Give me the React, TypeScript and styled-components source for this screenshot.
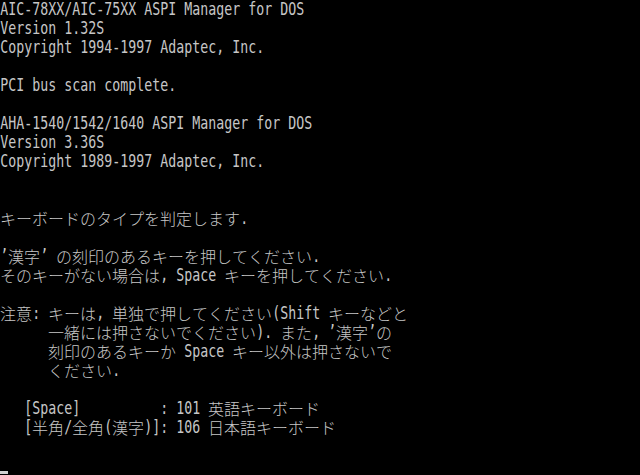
import React from 'react';
import styled, { createGlobalStyle } from 'styled-components';

// DOS/V text screen: 80 columns x 25 rows, 8x19 cells
const LINES = [
    'AIC-78XX/AIC-75XX ASPI Manager for DOS',
    'Version 1.32S',
    'Copyright 1994-1997 Adaptec, Inc.',
    '',
    'PCI bus scan complete.',
    '',
    'AHA-1540/1542/1640 ASPI Manager for DOS',
    'Version 3.36S',
    'Copyright 1989-1997 Adaptec, Inc.',
    '',
    '',
    'キーボードのタイプを判定します.',
    '',
    '’漢字’ の刻印のあるキーを押してください.',
    'そのキーがない場合は, Space キーを押してください.',
    '',
    '注意: キーは, 単独で押してください(Shift キーなどと',
    '      一緒には押さないでください). また, ’漢字’の',
    '      刻印のあるキーか Space キー以外は押さないで',
    '      ください.',
    '',
    '   [Space]          : 101 英語キーボード',
    '   [半角/全角(漢字)]: 106 日本語キーボード',
    '',
];

const isWide = (ch: string) => {
    const c = ch.codePointAt(0) || 0;
    return (
        (c >= 0x2e80 && c <= 0xa4cf) ||
        (c >= 0xf900 && c <= 0xfaff) ||
        (c >= 0xfe30 && c <= 0xfe4f) ||
        (c >= 0xff00 && c <= 0xff60) ||
        (c >= 0xffe0 && c <= 0xffe6)
    );
};

const App = () => {
    return (
        <>
            <GlobalStyle />
            <Screen>
                {LINES.map((text, i) => (
                    <Line key={i}>
                        {Array.from(text).map((ch, j) =>
                            isWide(ch) ? (
                                <Cell key={j} $wide>
                                    <WideGlyph>{ch}</WideGlyph>
                                </Cell>
                            ) : (
                                <Cell key={j}>
                                    <Glyph>{ch === ' ' ? '\u00a0' : ch}</Glyph>
                                </Cell>
                            )
                        )}
                    </Line>
                ))}
                <Line>
                    <Cursor />
                </Line>
            </Screen>
        </>
    );
};

export default App;

const GlobalStyle = createGlobalStyle`
    html, body {
        margin: 0;
        padding: 0;
        background: #000;
    }
`;

const Screen = styled.div`
    width: 640px;
    height: 475px;
    background: #000;
    color: #c6c6c6;
    overflow: hidden;
    display: flex;
    flex-direction: column;
`;

const Line = styled.div`
    height: 19px;
    display: flex;
    align-items: stretch;
    flex-shrink: 0;
`;

const Cell = styled.span<{ $wide?: boolean }>`
    width: ${(p) => (p.$wide ? '16px' : '8px')};
    flex-shrink: 0;
    display: flex;
    justify-content: center;
    white-space: pre;
    line-height: 19px;
`;

const Glyph = styled.span`
    display: inline-block;
    font-family: 'DejaVu Sans Mono', 'Liberation Mono', monospace;
    font-size: 17px;
    transform: scaleX(0.78);
`;

const WideGlyph = styled.span`
    display: inline-block;
    font-family: 'Noto Sans CJK JP', sans-serif;
    font-size: 16px;
    font-weight: 300;
`;

const Cursor = styled.span`
    width: 8px;
    height: 3px;
    margin-top: 15px;
    background: #d0d0d0;
`;
